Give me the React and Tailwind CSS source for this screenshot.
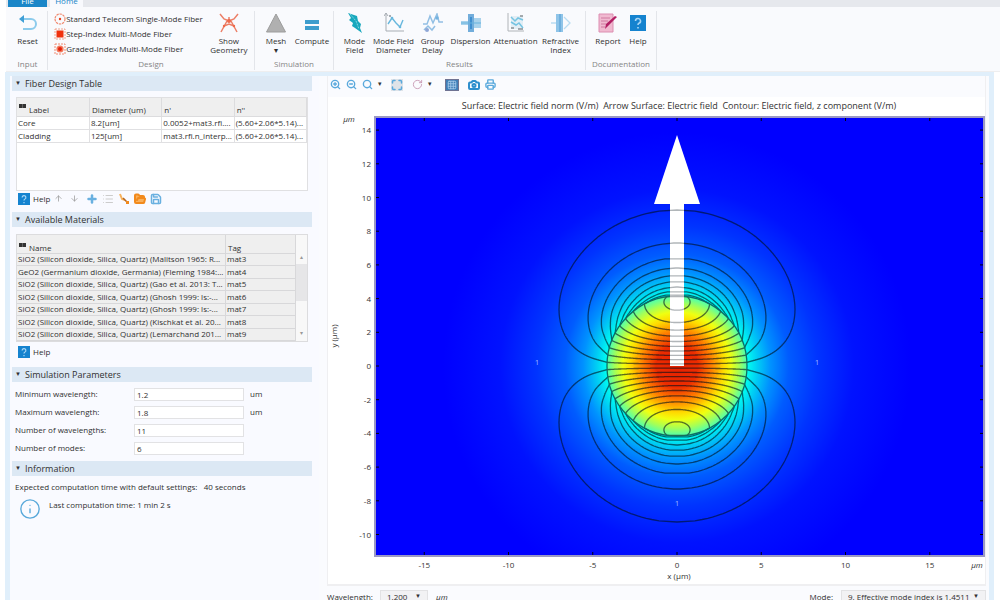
import React from 'react';
import {
  ArrowDown, ArrowUp, Camera, FolderOpen, Info, List,
  Maximize, Plus, Printer, Save, ZoomIn, ZoomOut, Search, RotateCw, Grid3x3,
} from 'lucide-react';

const FIBERS = [
  { label: 'Standard Telecom Single-Mode Fiber', kind: 'ring' },
  { label: 'Step-Index Multi-Mode Fiber', kind: 'step' },
  { label: 'Graded-Index Multi-Mode Fiber', kind: 'graded' },
];

const LAYERS = [
  ['Core', '8.2[um]', '0.0052+mat3.rfi....', '(5.60+2.06*5.14)...'],
  ['Cladding', '125[um]', 'mat3.rfi.n_interp...', '(5.60+2.06*5.14)...'],
];

const MATERIALS = [
  ['SiO2 (Silicon dioxide, Silica, Quartz) (Malitson 1965: R...', 'mat3'],
  ['GeO2 (Germanium dioxide, Germania) (Fleming 1984:...', 'mat4'],
  ['SiO2 (Silicon dioxide, Silica, Quartz) (Gao et al. 2013: T...', 'mat5'],
  ['SiO2 (Silicon dioxide, Silica, Quartz) (Ghosh 1999: ls:-...', 'mat6'],
  ['SiO2 (Silicon dioxide, Silica, Quartz) (Ghosh 1999: ls:-...', 'mat7'],
  ['SiO2 (Silicon dioxide, Silica, Quartz) (Kischkat et al. 20...', 'mat8'],
  ['SiO2 (Silicon dioxide, Silica, Quartz) (Lemarchand 201...', 'mat9'],
];

const PARAMS = [
  { id: 'min', label: 'Minimum wavelength:', value: '1.2', unit: 'um' },
  { id: 'max', label: 'Maximum wavelength:', value: '1.8', unit: 'um' },
  { id: 'count', label: 'Number of wavelengths:', value: '11' },
  { id: 'modes', label: 'Number of modes:', value: '6' },
];

/* ---------- ribbon icons ---------- */

const FiberIcon = ({ kind }) => (
  <svg viewBox="0 0 12 12" className="w-3 h-3 shrink-0" fill="none" stroke="#f08a70">
    {kind === 'ring' && <><circle cx="6" cy="6" r="5" strokeWidth="1.2" strokeDasharray="2.4 .8" /><circle cx="6" cy="6" r="1.2" fill="#e8401c" stroke="none" /></>}
    {kind === 'step' && <><rect x="1" y="1" width="10" height="10" strokeWidth=".8" strokeDasharray="2 1" /><rect x="2.5" y="2.5" width="7" height="7" fill="#f0300c" stroke="none" /></>}
    {kind === 'graded' && <><rect x="1" y="1" width="10" height="10" strokeWidth="1" strokeDasharray="2 1" /><circle cx="6" cy="6" r="3.6" fill="#f47a5c" stroke="none" /><circle cx="6" cy="6" r="2" fill="#e3200a" stroke="none" /></>}
  </svg>
);

const ToolSvg = ({ children }) => (
  <svg viewBox="0 0 20 20" className="w-5 h-5 shrink-0" fill="none">{children}</svg>
);

const ResetIcon = () => (
  <ToolSvg>
    <path d="M5 6h8a4.5 4.5 0 0 1 0 10H5" stroke="#8ccbec" strokeWidth="2" />
    <path d="M1 6l5-4v8z" fill="#3f9fd6" />
  </ToolSvg>
);
const GeometryIcon = () => (
  <ToolSvg>
    <path d="M1 1l4 5 5 2 5-2 4-5M10 4v4M8 8L2 19M12 8l6 11M5 13l5-2 5 2" stroke="#ec7f67" strokeWidth="1.5" />
    <circle cx="10" cy="8" r="2" fill="#ee6a4c" /><circle cx="5" cy="13" r="1.2" fill="#ee6a4c" /><circle cx="15" cy="13" r="1.2" fill="#ee6a4c" />
  </ToolSvg>
);
const MeshIcon = () => <ToolSvg><path d="M10 1l9.5 18H.5z" fill="#b0b0b0" stroke="#9c9c9c" /></ToolSvg>;
const ComputeIcon = () => (
  <ToolSvg><path d="M3 7h14v4H3zM3 13h14v4H3z" fill="#3d9dcd" /></ToolSvg>
);
const ModeFieldIcon = () => (
  <ToolSvg>
    <path d="M3 0l9 3 1 5 3 3-1 4 2 5-7-5-3-2 1-3-4-3 2-2z" fill="#18a8bd" />
    <path d="M5 1l6 7 3 8" stroke="#7fd6e0" strokeDasharray="2 1" />
  </ToolSvg>
);
const DiameterIcon = () => (
  <ToolSvg>
    <path d="M2 0v18h18M0 3l2-3 2 3M5 2l2 2M7 2L5 4" stroke="#a7adb3" />
    <path d="M4 11l4-6 4 5 4 4 3-7" stroke="#67b7dd" strokeWidth="1.4" />
    <circle cx="8" cy="5" r="1.3" fill="#67b7dd" /><circle cx="16" cy="14" r="1.3" fill="#67b7dd" />
  </ToolSvg>
);
const DelayIcon = () => (
  <ToolSvg>
    <path d="M0 11h4l3-8 3 7 4-9 2 8h4M1 17l4-4 4 4 3-4" stroke="#92bfe4" strokeWidth="1.5" />
    <circle cx="4" cy="17" r="2" fill="#8ea6d6" /><circle cx="14" cy="5" r="1.7" fill="#74b2df" />
  </ToolSvg>
);
const DispersionIcon = () => (
  <ToolSvg>
    <path d="M7 1h6v18H7z" fill="#72addb" /><path d="M9 4h2v12H9z" fill="#3f8fd0" />
    <path d="M0 8h7v4H0zM13 5h7v10h-7z" fill="#a8d2ec" /><path d="M0 10h20" stroke="#67b2dd" />
  </ToolSvg>
);
const AttenuationIcon = () => (
  <ToolSvg>
    <path d="M2 0v18h16" stroke="#b0b4b8" /><path d="M5 3h12v13H5z" fill="#e3eef5" />
    <path d="M5 4l4 4 3-3 5 2M5 9l5 3 3-2 4 5" stroke="#76c4e2" strokeWidth="1.5" />
    <path d="M5 15h3M14 3h3M12 16h5" stroke="#8b9094" strokeWidth="1.5" />
  </ToolSvg>
);
const RefractiveIcon = () => (
  <ToolSvg>
    <path d="M5 1h7v18H5z" fill="#8fc4e8" /><path d="M8 1h2v18H8z" fill="#6fb0de" />
    <path d="M0 10h5M13 4l6 6-6 6" stroke="#b9dcf1" strokeWidth="1.3" />
  </ToolSvg>
);
const ReportIcon = () => (
  <ToolSvg>
    <path d="M1 1h14v18H1z" fill="#f0b9d0" stroke="#dc8eb1" />
    <path d="M3 5h9M3 8h7M3 11h5M3 14h4" stroke="#d0799f" />
    <path d="M19 4l-9 9-3 3 1-5 9-8z" fill="#b31f64" />
  </ToolSvg>
);

const HelpBadge = ({ className }) => (
  <svg viewBox="0 0 16 16" className={className}>
    <rect width="16" height="16" fill="#1583cf" />
    <path d="M5.5 6a2.5 2.5 0 1 1 3.4 2.3c-.6.3-.9.7-.9 1.7M8 12v1.5" stroke="#a9d6f5" strokeWidth="1.6" fill="none" />
  </svg>
);

const TableMark = () => (
  <svg viewBox="0 0 7 6" className="w-[7px] h-[6px]">
    <path d="M0 0h7v4H0z" fill="#333" />
    <path d="M3.5 0v4" stroke="#999" strokeWidth=".5" />
  </svg>
);

const BrushIcon = () => (
  <svg viewBox="0 0 12 12" className="w-3 h-3" fill="none">
    <path d="M2 1l2 5 3 1" stroke="#f7b25c" strokeWidth="2" />
    <path d="M5 5l5 5" stroke="#b5651d" strokeWidth="1.5" />
    <path d="M8 8h3v3H8z" fill="#f28a1c" />
  </svg>
);

/* ---------- ribbon ---------- */

const Tool = ({ icon, label, width }) => (
  <button className={`${width} flex flex-col items-center gap-[3px] pt-[2px] shrink-0 whitespace-pre-line text-center text-[8px] leading-[9px]`}>
    {icon}
    <span>{label}</span>
  </button>
);

const Group = ({ title, width, children }) => (
  <div className={`${width} shrink-0 h-[59px] my-1 border-r border-[#e3e5ea] flex flex-col`}>
    <div className="flex-1 flex justify-center">{children}</div>
    <div className="text-center text-[8px] leading-[12px] text-[#858585]">{title}</div>
  </div>
);

const Ribbon = () => (
  <header className="ml-[6px]">
    <nav className="h-[7px] overflow-hidden bg-[#e6e8ed] flex items-end gap-[3px] pl-[2px] text-[8px] leading-[12px]">
      <button className="w-[39px] bg-[#1a86c8] text-white">File</button>
      <button className="w-[33px] bg-[#f8f9fd] text-[#1a86c8]">Home</button>
    </nav>
    <div className="flex bg-[#f9fafd] pl-[2px] border-b border-[#eeeeef] h-[65px]">
      <Group title="Input" width="w-[40px]">
        <Tool width="w-10" label="Reset" icon={<ResetIcon />} />
      </Group>
      <Group title="Design" width="w-[207px]">
        <div className="flex flex-col flex-1 pl-[7px]">
          {FIBERS.map((f) => (
            <button key={f.kind} className="flex items-center h-[15px] text-[8px] whitespace-nowrap">
              <FiberIcon kind={f.kind} />
              <span>{f.label}</span>
            </button>
          ))}
        </div>
        <Tool width="w-[52px]" label={'Show\nGeometry'} icon={<GeometryIcon />} />
      </Group>
      <Group title="Simulation" width="w-[79px]">
        <Tool width="w-[36px]" label={'Mesh\n▾'} icon={<MeshIcon />} />
        <Tool width="w-[36px]" label="Compute" icon={<ComputeIcon />} />
      </Group>
      <Group title="Results" width="w-[252px]">
        <Tool width="w-[34px]" label={'Mode\nField'} icon={<ModeFieldIcon />} />
        <Tool width="w-[44px]" label={'Mode Field\nDiameter'} icon={<DiameterIcon />} />
        <Tool width="w-[34px]" label={'Group\nDelay'} icon={<DelayIcon />} />
        <Tool width="w-[42px]" label="Dispersion" icon={<DispersionIcon />} />
        <Tool width="w-[48px]" label="Attenuation" icon={<AttenuationIcon />} />
        <Tool width="w-[42px]" label={'Refractive\nIndex'} icon={<RefractiveIcon />} />
      </Group>
      <Group title="Documentation" width="w-[71px]">
        <Tool width="w-[34px]" label="Report" icon={<ReportIcon />} />
        <Tool width="w-[26px]" label="Help" icon={<span className="w-5 h-5 flex items-center justify-center"><HelpBadge className="w-4 h-4" /></span>} />
      </Group>
    </div>
  </header>
);

/* ---------- settings column ---------- */

const Section = ({ title, height, children }) => (
  <section className={`${height} shrink-0`}>
    <h2 className="h-[15px] bg-[#dce8f4] flex items-center gap-1 pl-[3px] text-[9px]">
      <span className="text-[6px]">▼</span>
      {title}
    </h2>
    {children}
  </section>
);

const HelpButton = () => (
  <button className="flex items-center gap-[3px] text-[8px]">
    <HelpBadge className="w-3 h-3" />
    Help
  </button>
);

const FiberTable = () => (
  <div className="h-[94px] mx-1 mt-[6px] border border-[#e0e0e2] bg-white">
    <table className="w-full table-fixed text-[8px] leading-[12px] text-left">
      <thead className="bg-[#efefef]">
        <tr className="h-[18px] align-bottom">
          {['Label', 'Diameter (um)', "n'", "n''"].map((h, i) => (
            <th key={h} className="border-r border-b border-[#dcdcde] font-normal pl-[2px]">
              <span className="flex gap-[3px]">
                {i === 0 && <TableMark />}
                {h}
              </span>
            </th>
          ))}
        </tr>
      </thead>
      <tbody>
        {LAYERS.map((row) => (
          <tr key={row[0]} className="h-[13px]">
            {row.map((cell, i) => (
              <td key={i} className="border-r border-b border-[#e0e0e2] pl-px whitespace-nowrap overflow-hidden">{cell}</td>
            ))}
          </tr>
        ))}
      </tbody>
    </table>
  </div>
);

const MaterialTable = () => (
  <div className="mx-1 mt-[7px] flex border border-[#dcdcde] h-[108px]">
    <table className="flex-1 h-[106px] table-fixed text-[8px] leading-[10px] text-left bg-[#efefef]">
      <thead>
        <tr className="h-[18px] align-bottom">
          <th className="border-r border-b border-[#d8d8da] font-normal pl-[2px]">
            <span className="flex gap-[3px]">
              <TableMark />
              Name
            </span>
          </th>
          <th className="w-[70px] border-r border-b border-[#d8d8da] font-normal pl-[2px]">Tag</th>
        </tr>
      </thead>
      <tbody>
        {MATERIALS.map(([name, tag]) => (
          <tr key={tag}>
            <td className="border-r border-b border-[#d8d8da] pl-px whitespace-nowrap overflow-hidden">{name}</td>
            <td className="border-r border-b border-[#d8d8da] pl-px">{tag}</td>
          </tr>
        ))}
      </tbody>
    </table>
    <div className="w-[11px] flex flex-col items-center bg-[#f8f8f8] text-[6px] text-[#999]">
      <span className="h-[29px] pt-[18px]">▴</span>
      <div className="w-full h-[37px] bg-[#e6e6e8]" />
      <span className="flex-1 pt-[28px]">▾</span>
    </div>
  </div>
);

const Settings = () => (
  <aside className="w-[309px] shrink-0 bg-[#f9faff] pl-[2px] pr-[7px] flex flex-col">
    <Section title="Fiber Design Table" height="h-[136px]">
      <FiberTable />
      <div className="flex items-center gap-1 h-[15px] pl-[6px]">
        <HelpButton />
        <div className="flex items-center gap-1 text-[#69b0e0]">
          <button aria-label="Move up" className="w-3"><ArrowUp className="w-[9px] h-[9px] text-[#999]" /></button>
          <button aria-label="Move down" className="w-3"><ArrowDown className="w-[9px] h-[9px] text-[#999]" /></button>
          <button aria-label="Add"><Plus className="w-3 h-3" strokeWidth={5} /></button>
          <button aria-label="List"><List className="w-3 h-3 text-[#ccc]" /></button>
          <button aria-label="Clear"><BrushIcon /></button>
          <button aria-label="Load"><FolderOpen className="w-3 h-3 text-[#f28a1c]" fill="#f9b05a" strokeWidth={4} /></button>
          <button aria-label="Save"><Save className="w-3 h-3" strokeWidth={3} /></button>
        </div>
      </div>
    </Section>
    <Section title="Available Materials" height="h-[155px]">
      <MaterialTable />
      <div className="pl-[6px] pt-1"><HelpButton /></div>
    </Section>
    <Section title="Simulation Parameters" height="h-[94px]">
      <div className="grid gap-1 pt-[5px] pl-[3px]">
        {PARAMS.map((p) => (
          <div key={p.id} className="flex items-center h-[14px] text-[8px]">
            <label htmlFor={p.id} className="w-[119px]">{p.label}</label>
            <input id={p.id} defaultValue={p.value} className="w-[110px] h-[13px] border border-[#e2e2e4] bg-white px-[2px]" />
            <span className="pl-[6px]">{p.unit}</span>
          </div>
        ))}
      </div>
    </Section>
    <Section title="Information" height="h-[60px]">
      <p className="pl-[3px] pt-[5px] text-[8px] leading-[12px] whitespace-pre">Expected computation time with default settings:   40 seconds</p>
      <div className="flex gap-2 pt-[5px] pl-[7px] text-[8px] leading-[14px]">
        <Info className="w-[22px] h-[22px] text-[#58a8da]" strokeWidth={1.5} />
        <p>Last computation time: 1 min 2 s</p>
      </div>
    </Section>
  </aside>
);

/* ---------- mode plot ---------- */

const UNIT = 16.85; // plot px per um
const CORE = 70;

// ln of the longitudinal field in the cladding, sampled over radius
const TAIL = [[70, 2.955], [72, 2.833], [75, 2.708], [79, 2.565], [84.5, 2.398], [90.5, 2.197], [98, 1.946], [108, 1.609], [123, 1.099], [156, 0], [160, -0.14]];

const besselJ1 = (x) => {
  let term = x / 2;
  let sum = term;
  for (let k = 1; k < 12; k++) {
    term *= -(x * x) / 4 / (k * (k + 1));
    sum += term;
  }
  return sum;
};

const field = (r) => {
  if (r <= CORE) return 33.34 * besselJ1((2.01 * r) / CORE);
  const i = TAIL.findIndex(([x]) => x >= r);
  const [x0, y0] = TAIL[i - 1];
  const [x1, y1] = TAIL[i];
  return Math.exp(y0 + ((y1 - y0) * (r - x0)) / (x1 - x0));
};

const contour = (level) => {
  const pts = [];
  for (let r = 0.2; r < 159; r += 0.2) {
    const s = level / field(r);
    if (s <= 1) pts.push([r * Math.sqrt(1 - s * s), r * s]);
  }
  const right = pts.map(([x, y]) => `${x.toFixed(1)},${y.toFixed(1)}`);
  const left = pts.map(([x, y]) => `${(-x).toFixed(1)},${y.toFixed(1)}`).reverse();
  return `M${right.concat(left).join('L')}Z`;
};

const LOBE = [1, 3, 5, 7, 9, 11, 13, 15, 17, 19].map(contour);

const Contours = ({ opacity }) => (
  <g fill="none" stroke="#00101c" strokeWidth="1.3" opacity={opacity}>
    {LOBE.map((d, i) => (
      <React.Fragment key={i}>
        <path d={d} />
        <path d={d} transform="scale(1 -1)" />
      </React.Fragment>
    ))}
    <circle r={CORE} />
  </g>
);

const X_TICKS = [-15, -10, -5, 0, 5, 10, 15];
const Y_TICKS = [14, 12, 10, 8, 6, 4, 2, 0, -2, -4, -6, -8, -10];

const ModePlot = () => (
  <svg viewBox="-349 -269 657 487" className="w-full h-auto block" fontSize="8" fill="#333">
    <defs>
      <radialGradient id="cladding" gradientUnits="userSpaceOnUse" cx="0" cy="0" r="260">
        <stop offset=".27" stopColor="#00fff0" />
        <stop offset=".31" stopColor="#00cdf4" />
        <stop offset=".36" stopColor="#0092ff" />
        <stop offset=".43" stopColor="#005cff" />
        <stop offset=".54" stopColor="#0034ff" />
        <stop offset=".68" stopColor="#0012ff" />
        <stop offset=".9" stopColor="#0000ff" />
      </radialGradient>
      <radialGradient id="core" gradientUnits="userSpaceOnUse" cx="0" cy="0" r="70">
        <stop offset="0" stopColor="#e62000" />
        <stop offset=".3" stopColor="#ec2c00" />
        <stop offset=".48" stopColor="#ff7800" />
        <stop offset=".67" stopColor="#ffdc00" />
        <stop offset=".77" stopColor="#f0ff10" />
        <stop offset=".89" stopColor="#a4ff58" />
        <stop offset="1" stopColor="#4cffb0" />
      </radialGradient>
      <clipPath id="shaft"><path d="M-7 -163H7V0H-7z" /></clipPath>
    </defs>
    <text x="2" y="-257" textAnchor="middle" fontSize="9" className="whitespace-pre">Surface: Electric field norm (V/m)  Arrow Surface: Electric field  Contour: Electric field, z component (V/m)</text>
    <rect x="-302" y="-249" width="609" height="439" fill="url(#cladding)" stroke="#9a98c4" strokeWidth="2" />
    <circle r={CORE} fill="url(#core)" />
    <Contours opacity=".6" />
    <path d="M0 -231L23 -162H7V0H-7V-162H-23z" fill="#fff" />
    <g clipPath="url(#shaft)"><Contours opacity=".3" /></g>
    <g fill="#9db0ff" textAnchor="middle">
      <text x="-140" y="-1">1</text>
      <text x="140" y="-1">1</text>
      <text x="0" y="140">1</text>
    </g>
    <g textAnchor="middle">
      {X_TICKS.map((t) => (
        <React.Fragment key={t}>
          <path d={`M${t * UNIT} 189v-3M${t * UNIT} -248v3`} stroke="#001" />
          <text x={t * UNIT} y="202">{t}</text>
        </React.Fragment>
      ))}
      <text x="2" y="213">x (μm)</text>
      <text x="300" y="202" fontStyle="italic">μm</text>
      <text x="-328" y="-244" fontStyle="italic">μm</text>
      <text transform="translate(-340 -30) rotate(-90)">y (μm)</text>
    </g>
    <g textAnchor="end">
      {Y_TICKS.map((t) => (
        <React.Fragment key={t}>
          <path d={`M-301 ${-t * UNIT}h3M306 ${-t * UNIT}h-3`} stroke="#001" />
          <text x="-306" y={-t * UNIT + 3}>{t}</text>
        </React.Fragment>
      ))}
    </g>
  </svg>
);

const PlotToolbar = () => (
  <div className="h-[21px] flex items-center gap-[5px] pl-[2px] pb-1 bg-[#fafbfe] text-[#5aa9dc]">
    <button aria-label="Zoom in"><ZoomIn className="w-[11px] h-[11px]" strokeWidth={3} /></button>
    <button aria-label="Zoom out"><ZoomOut className="w-[11px] h-[11px]" strokeWidth={3} /></button>
    <button aria-label="Zoom box" className="flex items-center gap-[5px]">
      <Search className="w-[11px] h-[11px]" strokeWidth={3} />
      <span className="text-[7px] text-[#333]">▾</span>
    </button>
    <button aria-label="Zoom extents" className="bg-[#dfe3e8] mx-1"><Maximize className="w-3 h-3" strokeWidth={3} /></button>
    <button aria-label="Rotate" className="flex items-center gap-[5px] mr-2">
      <RotateCw className="w-[11px] h-[11px] text-[#c99bb5]" strokeWidth={2} />
      <span className="text-[7px] text-[#333]">▾</span>
    </button>
    <button aria-label="Grid" className="bg-[#3f7fb8] border border-[#6f7392] text-[#a9cdec] mr-1"><Grid3x3 className="w-3 h-[10px]" /></button>
    <button aria-label="Snapshot"><Camera className="w-3 h-3 text-[#2e8fcd]" strokeWidth={4} /></button>
    <button aria-label="Print"><Printer className="w-[11px] h-[11px]" strokeWidth={3} /></button>
  </div>
);

const Picker = ({ id, width, option }) => (
  <span className={`${width} flex items-center h-[13px] border border-[#e2e2e4] bg-[#f2f2f4]`}>
    <select id={id} className="appearance-none w-full px-[6px] leading-[11px] -mr-3">
      <option>{option}</option>
    </select>
    <span className="text-[6px] pointer-events-none">▼</span>
  </span>
);

const Graphics = () => (
  <main className="flex-1 min-w-0 pr-[3px]">
    <div className="border-x border-b-2 border-[#efeff1] bg-white">
      <PlotToolbar />
      <ModePlot />
    </div>
    <div className="flex items-center pt-[4px] text-[8px]">
      <label htmlFor="wavelength" className="w-[53px]">Wavelength:</label>
      <Picker id="wavelength" width="w-[48px]" option="1.200" />
      <span className="pl-2 flex-1 italic">μm</span>
      <label htmlFor="mode" className="pr-2">Mode:</label>
      <Picker id="mode" width="w-[145px]" option="9. Effective mode index is 1.4511" />
    </div>
  </main>
);

export default function App() {
  return (
    <div className="h-screen overflow-hidden flex flex-col bg-white text-[#303030] font-['Open_Sans','Noto_Sans',sans-serif]">
      <Ribbon />
      <div className="flex-1 min-h-0 flex gap-[8px] ml-[5px] mr-[6px] border-x-[5px] border-t-4 border-[#e0effb] bg-[#fafbfe]">
        <Settings />
        <Graphics />
      </div>
    </div>
  );
}
